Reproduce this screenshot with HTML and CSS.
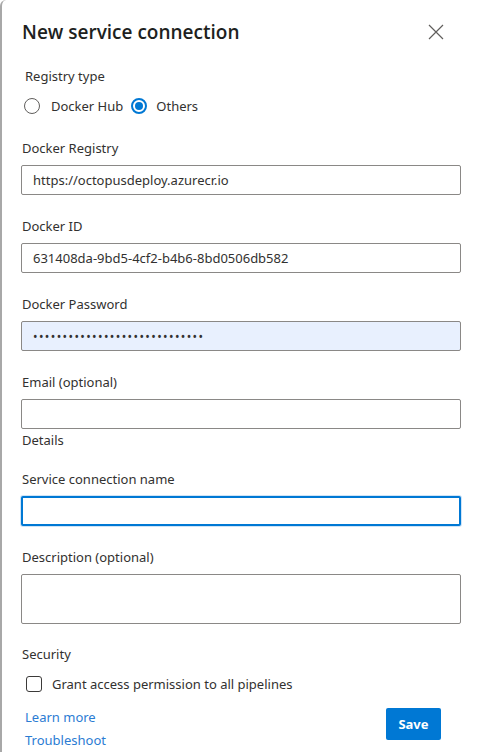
FILE: index.html
```html
<!DOCTYPE html>
<html lang="en">
<head>
<meta charset="utf-8">
<title>New service connection</title>
<link rel="stylesheet" href="styles.css">
</head>
<body>
<div class="panel">
  <div class="header">
    <h1 class="title">New service connection</h1>
    <button class="close" aria-label="Close">
      <svg width="16" height="16" viewBox="0 0 16 16"><path d="M1 1L15 15M15 1L1 15" stroke="#605e5c" stroke-width="1.2" fill="none"/></svg>
    </button>
  </div>

  <div class="group-label">Registry type</div>
  <div class="radios">
    <span class="radio"><span class="circle"></span><span class="rtext">Docker Hub</span></span>
    <span class="radio checked"><span class="circle"></span><span class="rtext">Others</span></span>
  </div>

  <div class="field">
    <label class="label">Docker Registry</label>
    <input class="input" type="text" value="https://octopusdeploy.azurecr.io">
  </div>
  <div class="field">
    <label class="label">Docker ID</label>
    <input class="input" type="text" value="631408da-9bd5-4cf2-b4b6-8bd0506db582">
  </div>
  <div class="field">
    <label class="label">Docker Password</label>
    <input class="input autofill" type="password" value="xxxxxxxxxxxxxxxxxxxxxxxxxxxxx">
  </div>
  <div class="field tight">
    <label class="label">Email (optional)</label>
    <input class="input" type="text" value="">
  </div>
  <div class="section-label">Details</div>
  <div class="field">
    <label class="label">Service connection name</label>
    <input class="input focused" type="text" value="">
  </div>
  <div class="field">
    <label class="label">Description (optional)</label>
    <textarea class="input area"></textarea>
  </div>

  <div class="group-label sec">Security</div>
  <div class="check-row">
    <span class="checkbox"></span>
    <span class="ctext">Grant access permission to all pipelines</span>
  </div>

  <div class="footer">
    <div class="links">
      <a class="link" href="#">Learn more</a>
      <a class="link" href="#">Troubleshoot</a>
    </div>
    <button class="save">Save</button>
  </div>
</div>
</body>
</html>
```

FILE: styles.css
```css
* { box-sizing: border-box; }
html, body { margin: 0; padding: 0; background: #ffffff; }
body {
  font-family: "Noto Sans", "Open Sans", "Liberation Sans", sans-serif;
  color: #323130;
  width: 479px;
  height: 752px;
  overflow: hidden;
}
.panel {
  height: 752px;
  border-left: 2px solid #a8a8a8;
  border-top-left-radius: 6px;
  padding: 18px 18px 0 19px;
  display: flex;
  flex-direction: column;
}
.header {
  display: flex;
  justify-content: space-between;
  align-items: center;
  height: 28px;
  padding-left: 1px;
}
.title {
  margin: 0;
  font-family: "Open Sans", "Noto Sans", sans-serif;
  font-size: 19px;
  font-weight: 600;
  line-height: 28px;
  color: #201f1e;
  letter-spacing: 0;
}
.close {
  border: 0;
  background: transparent;
  padding: 0;
  width: 16px;
  height: 16px;
  margin-right: 17px;
  display: flex;
}
.group-label {
  margin-top: 20px;
  padding-left: 4px;
  font-size: 13px;
  line-height: 20px;
}
.radios {
  display: flex;
  align-items: center;
  height: 20px;
  margin-top: 10px;
  padding-left: 3px;
  gap: 8px;
}
.radio {
  display: flex;
  align-items: center;
  gap: 11px;
  font-size: 13px;
}
.radio.checked { gap: 9px; }
.circle {
  width: 16px;
  height: 16px;
  border-radius: 50%;
  border: 1px solid #605e5c;
  display: block;
  position: relative;
}
.radio.checked .circle {
  border: 2px solid #0078d4;
}
.radio.checked .circle::after {
  content: "";
  position: absolute;
  left: 2px;
  top: 2px;
  width: 8px;
  height: 8px;
  border-radius: 50%;
  background: #0078d4;
}
.field {
  display: flex;
  flex-direction: column;
  margin-top: 22px;
}
.field + .field { margin-top: 21px; }
.label {
  font-size: 13px;
  line-height: 20px;
  padding-left: 1px;
  margin-bottom: 7px;
}
.input {
  width: 440px;
  height: 30px;
  border: 1px solid #8a8886;
  border-radius: 2px;
  padding: 0 11px;
  font-family: "Noto Sans", "Open Sans", "Liberation Sans", sans-serif;
  font-size: 13px;
  color: #323130;
  background: #ffffff;
  outline: none;
}
.input.autofill {
  background: #e8f0fe;
  font-size: 12px;
  letter-spacing: 1.4px;
}
.input.focused {
  border: 2px solid #0078d4;
  box-shadow: 0 0 0 1px #cfe4f7;
}
.input.area {
  height: 50px;
  resize: none;
}
.section-label {
  font-size: 13px;
  line-height: 20px;
  padding-left: 1px;
  margin-top: 1px;
}
.section-label + .field { margin-top: 19px; }
.group-label.sec {
  margin-top: 20px;
  padding-left: 1px;
}
.check-row {
  display: flex;
  align-items: center;
  height: 20px;
  margin-top: 10px;
  padding-left: 5px;
  gap: 10px;
  font-size: 13px;
}
.checkbox {
  width: 16px;
  height: 16px;
  border: 1px solid #3b3a39;
  border-radius: 3px;
  display: block;
}
.footer {
  display: flex;
  justify-content: space-between;
  align-items: flex-start;
  margin-top: 12px;
  padding-right: 20px;
}
.links {
  display: flex;
  flex-direction: column;
  padding-left: 4px;
}
.link {
  font-size: 13px;
  line-height: 23px;
  color: #2b7cd3;
  text-decoration: none;
}
.save {
  margin-top: 2px;
  width: 55px;
  height: 32px;
  border: 0;
  border-radius: 2px;
  background: #0078d4;
  color: #ffffff;
  font-family: "Noto Sans", "Open Sans", "Liberation Sans", sans-serif;
  font-weight: 700;
  font-size: 13px;
  padding: 0;
}
```
